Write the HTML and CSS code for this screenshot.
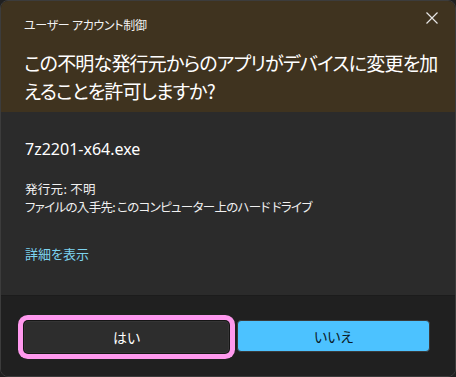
FILE: index.html
```html
<!DOCTYPE html>
<html lang="ja">
<head>
<meta charset="utf-8">
<link rel="stylesheet" href="styles.css">
</head>
<body>
<div class="dialog">
  <div class="header">
    <div class="top">
      <span class="label">ユーザー アカウント制御</span>
      <span class="close">
        <svg width="12" height="12" viewBox="0 0 12 12"><path d="M0.5 0.5 L11.5 11.5 M11.5 0.5 L0.5 11.5" stroke="#e6e6e6" stroke-width="1.2" fill="none"/></svg>
      </span>
    </div>
    <div class="title">この不明な発行元からのアプリがデバイスに変更を加<br>えることを許可しますか?</div>
  </div>
  <div class="content">
    <div class="app">7z2201-x64.exe</div>
    <div class="info">
      <div class="publisher">発行元: 不明</div>
      <div class="origin">ファイルの入手先: このコンピューター上のハード ドライブ</div>
    </div>
    <div class="link">詳細を表示</div>
  </div>
  <div class="footer">
    <div class="btn btn-yes">はい</div>
    <div class="btn btn-no">いいえ</div>
  </div>
</div>
</body>
</html>
```
FILE: styles.css
```css
html, body {
  margin: 0;
  padding: 0;
  background: #202020;
}
body {
  font-family: "Noto Sans CJK JP", "Noto Sans", sans-serif;
  font-feature-settings: "palt";
  color: #ffffff;
}
.dialog {
  width: 456px;
  height: 377px;
  box-sizing: border-box;
  border: 1px solid #3c3c3c;
  border-radius: 8px;
  overflow: hidden;
  display: flex;
  flex-direction: column;
}
.header {
  background: #3f331f;
  height: 111px;
  box-sizing: border-box;
  padding: 16px 0 0 23px;
}
.top {
  display: flex;
  justify-content: space-between;
  align-items: center;
  height: 16px;
}
.label {
  font-size: 12px;
  line-height: 16px;
  color: #f2f2f2;
  letter-spacing: -0.3px;
}
.close {
  display: flex;
  width: 12px;
  height: 12px;
  margin-right: 17px;
  margin-top: -15px;
}
.title {
  margin-top: 16px;
  font-size: 19px;
  line-height: 28px;
  color: #ffffff;
  letter-spacing: -0.8px;
  white-space: nowrap;
}
.content {
  background: #2b2b2b;
  height: 183px;
  box-sizing: border-box;
  padding: 26px 0 0 24px;
}
.app {
  font-size: 16px;
  line-height: 22px;
  font-family: "Noto Sans", "Noto Sans CJK JP", sans-serif;
}
.info {
  margin-top: 20px;
  font-size: 12.5px;
  line-height: 18px;
  color: #f0f0f0;
}
.publisher {
  letter-spacing: 0.3px;
}
.origin {
  letter-spacing: -0.7px;
}
.link {
  margin-top: 29px;
  font-size: 13px;
  line-height: 18px;
  color: #7dd3ef;
}
.footer {
  flex: 1;
  background: #202020;
  display: flex;
  align-items: center;
  padding: 0 0 0 23px;
  gap: 8px;
  border-top: 1px solid #1c1c1c;
}
.btn {
  height: 32px;
  box-sizing: border-box;
  border-radius: 4px;
  display: flex;
  align-items: center;
  justify-content: center;
  font-size: 14px;
}
.btn-yes {
  width: 205px;
  background: #2d2d2d;
  border: 1px solid #353535;
  color: #ffffff;
  box-shadow: 0 0 0 1px #151515, 0 0 0 6px #ff99ee;
  margin-top: 1px;
}
.btn-no {
  width: 193px;
  background: #4cc2ff;
  border: 1px solid #3a3a3a;
  color: #0a1a26;
}
```
